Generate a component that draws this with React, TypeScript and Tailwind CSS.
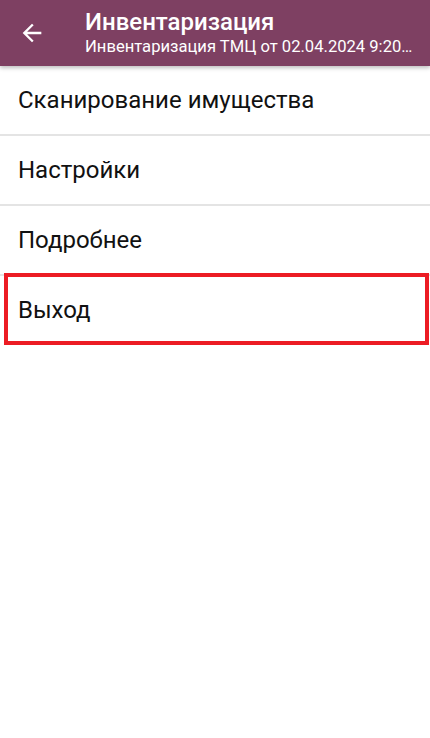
const items = ['Сканирование имущества', 'Настройки', 'Подробнее']

function BackArrow() {
  return (
    <svg viewBox="0 0 24 24" className="w-[28px] h-[28px]" fill="#ffffff">
      <path d="M20 11H7.83l5.59-5.59L12 4l-8 8 8 8 1.41-1.41L7.83 13H20v-2z" />
    </svg>
  )
}

export default function App() {
  return (
    <div className="w-[430px] h-[738px] bg-white overflow-hidden font-['Roboto',sans-serif]">
      {/* Toolbar */}
      <div className="relative z-10 h-[66px] bg-[#7e4062] flex items-center shadow-[0_2px_4px_rgba(0,0,0,0.25)]">
        <div className="w-[85px] pl-[18px] flex items-center">
          <BackArrow />
        </div>
        <div className="flex-1 min-w-0 pr-[12px] text-white">
          <div className="text-[24px] leading-[28px] font-medium whitespace-nowrap">Инвентаризация</div>
          <div className="text-[16.6px] leading-[22px] whitespace-nowrap">Инвентаризация ТМЦ от 02.04.2024 9:20…</div>
        </div>
      </div>

      {/* Menu */}
      <div className="flex flex-col">
        {items.map(item => (
          <div
            key={item}
            className="h-[70px] flex items-center px-[18px] border-b-2 border-[#e4e4e4] text-[24px] text-[#111111]"
          >
            {item}
          </div>
        ))}
        <div className="relative h-[68px] flex items-center px-[18px] text-[24px] text-[#111111]">
          Выход
          <div className="absolute left-[4px] right-[1px] -top-[3px] -bottom-[1px] border-[4px] border-[#ec1c24]" />
        </div>
      </div>
    </div>
  )
}
